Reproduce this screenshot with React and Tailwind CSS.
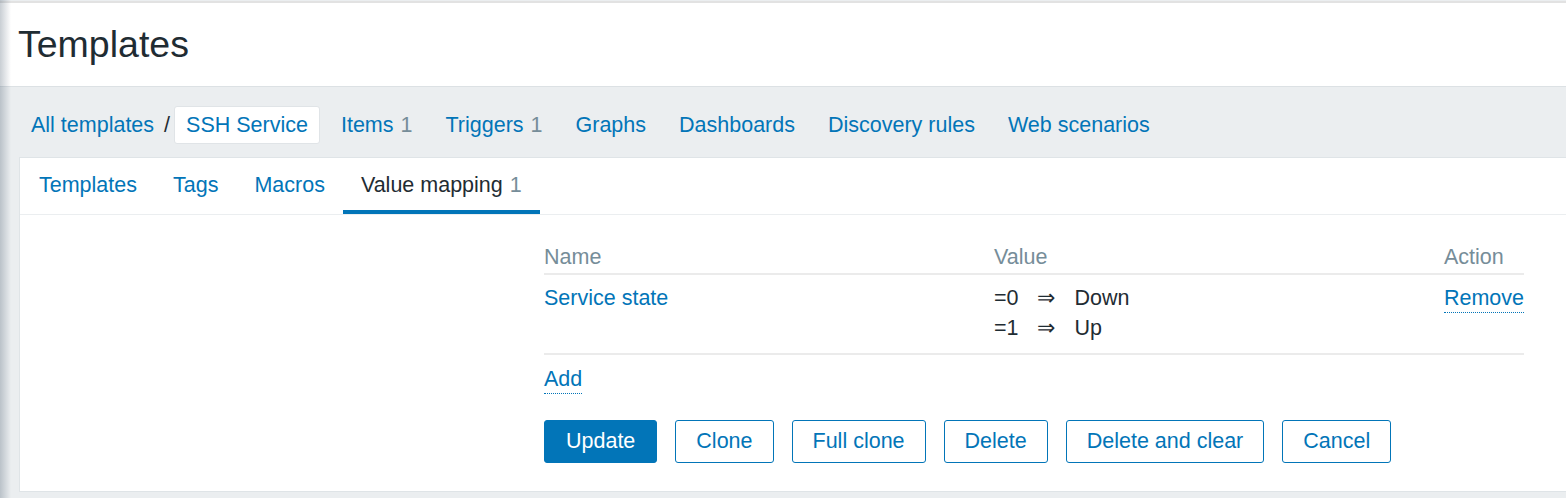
import React from "react";

const navItems = [
  { label: "Items", count: 1 },
  { label: "Triggers", count: 1 },
  { label: "Graphs" },
  { label: "Dashboards" },
  { label: "Discovery rules" },
  { label: "Web scenarios" },
];

const tabs = [
  { label: "Templates" },
  { label: "Tags" },
  { label: "Macros" },
  { label: "Value mapping", count: 1, active: true },
];

const mappings = [
  { value: "=0", result: "Down" },
  { value: "=1", result: "Up" },
];

const buttons = ["Clone", "Full clone", "Delete", "Delete and clear", "Cancel"];

export default function App() {
  return (
    <div className="relative h-[498px] overflow-hidden bg-[#ebeef0] pt-[1px] font-['Liberation_Sans',Arial,sans-serif] text-[21.5px] text-[#1f2c33]">
      {/* sidebar shadow on the left edge */}
      <div className="pointer-events-none absolute inset-y-0 left-0 w-[11px] bg-linear-to-r from-[rgba(60,80,100,0.28)] to-transparent" />

      <header className="flex h-[86px] items-center border-t-2 border-b border-t-[#e2e2e2] border-b-[#dce1e4] bg-white pl-[18px]">
        <h1 className="text-[37.5px] leading-none">Templates</h1>
      </header>

      <nav className="flex items-center px-[19px] pt-[19px] pb-[13px] leading-[24px]">
        <a className="pl-3 pr-[10px] text-[#0275b8]">All templates</a>
        <span>/</span>
        <a className="ml-1 rounded-[3px] border border-[#e0e4e7] bg-white px-[11px] py-[6px] text-[#0275b8]">
          SSH Service
        </a>
        <div className="ml-[9px] flex gap-[9px]">
          {navItems.map((item) => (
            <a key={item.label} className="px-3 text-[#0275b8]">
              {item.label}
              {item.count && (
                <span className="ml-[7px] text-[#768d99]">{item.count}</span>
              )}
            </a>
          ))}
        </div>
      </nav>

      <div className="ml-[19px] mr-[-20px] border border-[#dfe4e7] bg-white">
        <div className="flex h-[57px] border-b border-[#ebeef0] pl-[1px]">
          {tabs.map((tab) => (
            <div
              key={tab.label}
              className={
                tab.active
                  ? "flex items-center border-b-4 border-[#0275b8] px-[18px] pt-[2px]"
                  : "flex items-center border-b-4 border-transparent px-[18px] pt-[2px] text-[#0275b8]"
              }
            >
              {tab.label}
              {tab.count && (
                <span className="ml-[7px] text-[#768d99]">{tab.count}</span>
              )}
            </div>
          ))}
        </div>

        <div className="flex pt-[27px] pb-[28px]">
          <div className="w-[524px] shrink-0" />
          <div className="w-[980px]">
            <table className="w-full border-collapse leading-[30px]">
              <thead>
                <tr className="border-b-2 border-[#ebebeb] text-left text-[#768d99]">
                  <th className="w-[450px] pb-[1px] font-normal">Name</th>
                  <th className="w-[450px] pb-[1px] font-normal">Value</th>
                  <th className="pb-[1px] font-normal">Action</th>
                </tr>
              </thead>
              <tbody>
                <tr className="border-b-2 border-[#ebebeb] align-top">
                  <td className="pt-[8px] pb-[10px]">
                    <a className="text-[#0275b8]">Service state</a>
                  </td>
                  <td className="pt-[8px] pb-[10px]">
                    <div className="grid w-max grid-cols-[auto_auto_auto] gap-x-[19px]">
                      {mappings.map((m) => (
                        <React.Fragment key={m.value}>
                          <span>{m.value}</span>
                          <span>⇒</span>
                          <span>{m.result}</span>
                        </React.Fragment>
                      ))}
                    </div>
                  </td>
                  <td className="pt-[8px] pb-[10px]">
                    <a className="border-b border-dotted border-[#0275b8] pb-[2px] leading-[24px] text-[#0275b8]">
                      Remove
                    </a>
                  </td>
                </tr>
              </tbody>
            </table>

            <div className="pt-[12px] leading-[24px]">
              <a className="border-b border-dotted border-[#0275b8] pb-[2px] text-[#0275b8]">
                Add
              </a>
            </div>

            <div className="mt-[29px] flex gap-[18px]">
              <button className="h-[43px] rounded-[3px] border border-[#0275b8] bg-[#0275b8] px-[21px] text-white">
                Update
              </button>
              {buttons.map((b) => (
                <button
                  key={b}
                  className="h-[43px] rounded-[3px] border border-[#0275b8] bg-white px-[20px] text-[#0275b8]"
                >
                  {b}
                </button>
              ))}
            </div>
          </div>
        </div>
      </div>
    </div>
  );
}
